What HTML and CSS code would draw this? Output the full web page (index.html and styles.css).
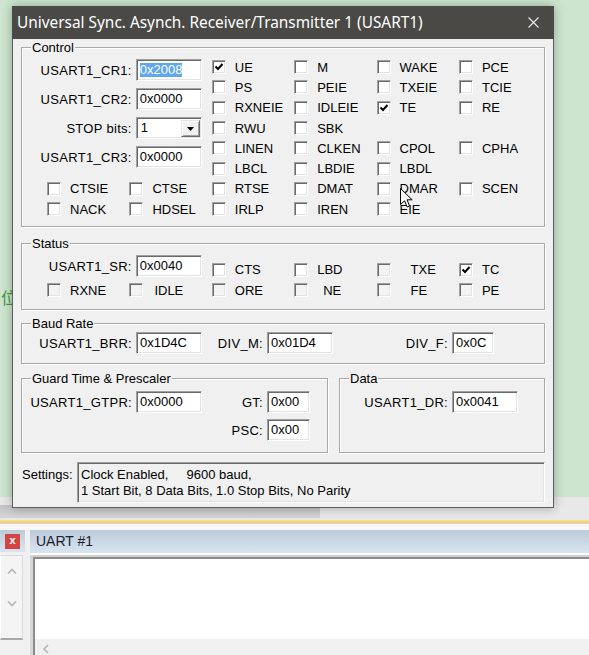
FILE: index.html
```html
<!DOCTYPE html>
<html>
<head>
<meta charset="utf-8">
<title>USART1</title>
<link rel="stylesheet" href="styles.css">
</head>
<body>
<div class="desktop"><span class="bg-char">位</span></div>
<div class="hband"><div class="hthumb"></div></div>
<div class="splitter"></div>
<div class="panes">
  <div class="pane-left">
    <div class="pane-head"><span class="close-btn">x</span></div>
    <div class="lbody">
      <svg class="chev" width="10" height="6" viewBox="0 0 10 6"><path d="M1 5.5 5 1.5 9 5.5"/></svg>
      <svg class="chev" width="10" height="6" viewBox="0 0 10 6"><path d="M1 0.5 5 4.5 9 0.5"/></svg>
    </div>
  </div>
  <div class="pane-main">
    <div class="pane-head"><span class="pane-title">UART #1</span></div>
    <div class="term">
      <div class="term-in">
        <div class="term-area"></div>
        <div class="term-scroll"><svg class="chev" width="7" height="10" viewBox="0 0 7 10"><path d="M6 1 2 5 6 9"/></svg></div>
      </div>
    </div>
  </div>
</div>

<div class="dialog">
  <div class="titlebar">
    <span class="title">Universal Sync. Asynch. Receiver/Transmitter 1 (USART1)</span>
    <svg class="close-x" width="11" height="11" viewBox="0 0 11 11"><path d="M0.5 0.5 10.5 10.5M10.5 0.5 0.5 10.5"/></svg>
  </div>
  <div class="dlg-body">
    <div class="group g-control">
      <span class="group-title">Control</span>
      <div class="cgrid">
        <div class="regs">
          <div class="field"><span class="lbl">USART1_CR1:</span><span class="edit"><span class="sel">0x2008</span></span></div>
          <div class="field"><span class="lbl">USART1_CR2:</span><span class="edit">0x0000</span></div>
          <div class="field"><span class="lbl">STOP bits:</span><span class="edit combo"><span class="combo-val">1</span><span class="combo-btn"><svg width="7" height="4" viewBox="0 0 7 4"><path d="M0 0h7L3.5 4z"/></svg></span></span></div>
          <div class="field"><span class="lbl">USART1_CR3:</span><span class="edit">0x0000</span></div>
        </div>
        <span class="cb"><i class="box"><svg viewBox="0 0 12 12"><path d="M2.5 5.5 5 8l4.5-5"/></svg></i>UE</span>
        <span class="cb"><i class="box"></i>M</span>
        <span class="cb"><i class="box"></i>WAKE</span>
        <span class="cb"><i class="box"></i>PCE</span>

        <span class="cb"><i class="box"></i>PS</span>
        <span class="cb"><i class="box"></i>PEIE</span>
        <span class="cb"><i class="box"></i>TXEIE</span>
        <span class="cb"><i class="box"></i>TCIE</span>

        <span class="cb"><i class="box"></i>RXNEIE</span>
        <span class="cb"><i class="box"></i>IDLEIE</span>
        <span class="cb"><i class="box"><svg viewBox="0 0 12 12"><path d="M2.5 5.5 5 8l4.5-5"/></svg></i>TE</span>
        <span class="cb"><i class="box"></i>RE</span>

        <span class="cb"><i class="box"></i>RWU</span>
        <span class="cb"><i class="box"></i>SBK</span>
        <span class="cell"></span>
        <span class="cell"></span>

        <span class="cb"><i class="box"></i>LINEN</span>
        <span class="cb"><i class="box"></i>CLKEN</span>
        <span class="cb"><i class="box"></i>CPOL</span>
        <span class="cb"><i class="box"></i>CPHA</span>

        <span class="cb"><i class="box"></i>LBCL</span>
        <span class="cb"><i class="box"></i>LBDIE</span>
        <span class="cb"><i class="box"></i>LBDL</span>
        <span class="cell"></span>

        <span class="cb"><i class="box"></i>CTSIE</span>
        <span class="cb"><i class="box"></i>CTSE</span>
        <span class="cb"><i class="box"></i>RTSE</span>
        <span class="cb"><i class="box"></i>DMAT</span>
        <span class="cb"><i class="box"></i>DMAR</span>
        <span class="cb"><i class="box"></i>SCEN</span>

        <span class="cb"><i class="box"></i>NACK</span>
        <span class="cb"><i class="box"></i>HDSEL</span>
        <span class="cb"><i class="box"></i>IRLP</span>
        <span class="cb"><i class="box"></i>IREN</span>
        <span class="cb"><i class="box"></i>EIE</span>
        <span class="cell"></span>
      </div>
    </div>

    <div class="group g-status">
      <span class="group-title">Status</span>
      <div class="sgrid">
        <div class="field field-wide"><span class="lbl">USART1_SR:</span><span class="edit">0x0040</span></div>
        <span class="cb top"><i class="box"></i>CTS</span>
        <span class="cb top"><i class="box"></i>LBD</span>
        <span class="cb top"><i class="box dim"></i><span class="shift-11">TXE</span></span>
        <span class="cb top"><i class="box"><svg viewBox="0 0 12 12"><path d="M2.5 5.5 5 8l4.5-5"/></svg></i>TC</span>

        <span class="cb"><i class="box dim"></i>RXNE</span>
        <span class="cb"><i class="box dim"></i><span class="shift-2">IDLE</span></span>
        <span class="cb"><i class="box dim"></i>ORE</span>
        <span class="cb"><i class="box dim"></i><span class="shift-6">NE</span></span>
        <span class="cb"><i class="box dim"></i><span class="shift-11">FE</span></span>
        <span class="cb"><i class="box dim"></i>PE</span>
      </div>
    </div>

    <div class="group g-baud">
      <span class="group-title">Baud Rate</span>
      <div class="field w180"><span class="lbl">USART1_BRR:</span><span class="edit">0x1D4C</span></div>
      <div class="field w131"><span class="lbl">DIV_M:</span><span class="edit">0x01D4</span></div>
      <div class="field w161"><span class="lbl">DIV_F:</span><span class="edit short">0x0C</span></div>
    </div>

    <div class="group-row">
      <div class="group g-guard">
        <span class="group-title">Guard Time &amp; Prescaler</span>
        <div class="ggrid">
          <div class="field"><span class="lbl">USART1_GTPR:</span><span class="edit">0x0000</span></div>
          <div class="field"><span class="lbl">GT:</span><span class="edit tiny">0x00</span></div>
          <span class="cell"></span>
          <div class="field"><span class="lbl">PSC:</span><span class="edit tiny">0x00</span></div>
        </div>
      </div>
      <div class="group g-data">
        <span class="group-title">Data</span>
        <div class="field w178"><span class="lbl">USART1_DR:</span><span class="edit">0x0041</span></div>
      </div>
    </div>

    <div class="settings">
      <span class="settings-lbl">Settings:</span>
      <div class="settings-box">
        <div>Clock Enabled,&nbsp;&nbsp;&nbsp;&nbsp; 9600 baud,</div>
        <div>1 Start Bit, 8 Data Bits, 1.0 Stop Bits, No Parity</div>
      </div>
    </div>
  </div>
</div>

<svg class="cursor" width="13" height="20" viewBox="0 0 13 20"><path d="M0.5 0.5V16.5L4.5 12.8L7.2 19L9.6 18L7 11.8H12.2Z"/></svg>
</body>
</html>
```

FILE: styles.css
```css
* { box-sizing: border-box; }
html, body { margin: 0; padding: 0; }
body {
  width: 589px;
  height: 655px;
  overflow: hidden;
  position: relative;
  background: #f0f0f0;
  font-family: "Liberation Sans", Arial, sans-serif;
  font-size: 13px;
  line-height: 15px;
  color: #000;
}

/* ---------- background application ---------- */
.desktop { height: 497px; background: #cde5ce; position: relative; }
.bg-char {
  position: absolute; left: 1px; top: 288px;
  font-family: "Noto Sans CJK SC", sans-serif;
  font-size: 16px; line-height: 18px; color: #3f9b45;
}
.hband { height: 23px; background: #e8e8e8; padding-top: 8px; }
.hthumb { width: 320px; height: 13px; background: linear-gradient(#c4c4c4, #d5d5d5); }
.splitter {
  height: 10px;
  background: linear-gradient(#fbe29a 0, #f3ca5c 3px, #d6d6d6 3px, #d6d6d6 4px, #f7f7f7 4px);
}
.panes { display: flex; gap: 5px; height: 125px; }
.pane-head {
  height: 23px;
  background: linear-gradient(#bccbd9, #d8e5f1);
  display: flex; align-items: center;
}
.pane-left { width: 25px; }
.pane-left .pane-head { height: 22px; padding-left: 5px; }
.close-btn {
  width: 15px; height: 15px;
  background: #d24545;
  color: #fff; font-weight: bold; font-size: 11px; line-height: 13px;
  text-align: center;
}
.lbody {
  margin-top: 3px; height: 85px; width: 23px;
  background: #f4f4f4;
  border: 1px solid #dadada; border-left-color: #fff; border-bottom: 2px solid #a8a8a8;
  display: flex; flex-direction: column; align-items: center;
  gap: 27px; padding-top: 12px;
}
.chev { fill: none; stroke: #b4b4b4; stroke-width: 1.6; }
.pane-main { flex: 1; background: #fff; }
.pane-title { padding-left: 6px; font-size: 14px; color: #1c1c2c; }
.term {
  margin-top: 2px; height: 100px;
  border-top: 2px solid #d0d0d0; border-left: 3px solid #d6d6d6;
}
.term-in {
  height: 100%;
  border-top: 2px solid #8c8c8c; border-left: 2px solid #8c8c8c;
  display: flex; flex-direction: column;
}
.term-area { flex: 1; background: #fff; }
.term-scroll { height: 16px; background: #f0f0f0; padding: 3px 0 0 7px; }

/* ---------- dialog window ---------- */
.dialog {
  position: absolute; left: 12px; top: 6px;
  width: 542px; height: 502px;
  background: #f0f0f0;
  border: 1px solid #5e5e5e; border-top: 0;
  box-shadow: 0 0 10px rgba(0, 0, 0, 0.3);
}
.titlebar {
  height: 33px; margin: 0 -1px;
  background: #4a4946;
  display: flex; align-items: center; justify-content: space-between;
  padding: 0 15px 0 5px;
}
.title {
  font-family: "Noto Sans", "Open Sans", sans-serif;
  font-size: 15.4px; color: #fff;
}
.close-x { fill: none; stroke: #ececec; stroke-width: 1.1; }
.dlg-body { padding: 8px 8px 0; }

.group {
  position: relative;
  border: 1px solid #a9a9a9;
  box-shadow: inset 1px 1px 0 #fff, 1px 1px 0 #fff;
}
.group-title {
  position: absolute; top: -8px; left: 9px;
  padding: 0 1px; background: #f0f0f0; line-height: 15px;
}
.g-control { height: 180px; padding: 9px 0 0 25px; }
.g-status { height: 67px; margin-top: 16px; padding: 11px 0 0 25px; }
.g-baud { height: 41px; margin-top: 13px; padding-top: 8px; display: flex; }
.group-row { display: flex; gap: 11px; margin-top: 14px; }
.g-guard { width: 307px; height: 75px; padding-top: 12px; }
.g-data { width: 206px; height: 75px; padding-top: 12px; }

.cgrid {
  display: grid;
  grid-template-columns: repeat(6, 82.4px);
  grid-template-rows: repeat(8, 20.3px);
  align-items: center;
}
.regs {
  grid-column: 1 / 3; grid-row: 1 / 7;
  align-self: start; margin: 2px 0 0 -25px;
  display: flex; flex-direction: column; gap: 7px;
}
.regs .field { padding-right: 10px; }

.sgrid {
  display: grid;
  grid-template-columns: repeat(6, 82.4px);
  grid-template-rows: 22px 20px;
  row-gap: 3px;
  align-items: center;
}
.field-wide { grid-column: 1 / 3; margin-left: -25px; padding-right: 10px; }
.cb.top { align-self: end; }

.ggrid { display: grid; grid-template-columns: 180px 108px; row-gap: 6px; }

.field {
  display: flex; justify-content: flex-end; align-items: center;
  gap: 4px; height: 22px;
}
.lbl { white-space: nowrap; letter-spacing: 0.3px; }
.w180 { width: 180px; }
.w131 { width: 131px; }
.w161 { width: 161px; }
.w178 { width: 178px; }

.edit {
  width: 66px; height: 22px; flex: none;
  background: #fff;
  border: 1px solid; border-color: #a0a0a0 #fff #fff #a0a0a0;
  box-shadow: inset 1px 1px 0 #6a6a6a, inset -1px -1px 0 #e3e3e3;
  padding: 2px 0 0 3px; line-height: 16px;
  white-space: nowrap;
}
.edit.short { width: 42px; }
.edit.tiny { width: 43px; }
.sel { display: inline-block; background: #5fa8ec; color: #fff; line-height: 14px; margin-top: 1px; }
.combo { display: flex; padding: 2px 1px 1px 2px; }
.combo-val { flex: 1; padding: 0 0 0 2px; }
.combo-btn {
  width: 19px; height: 17px;
  background: #f0f0f0;
  border: 1px solid; border-color: #e3e3e3 #6a6a6a #6a6a6a #e3e3e3;
  box-shadow: inset 1px 1px 0 #fff, inset -1px -1px 0 #a0a0a0;
  display: flex; align-items: center; justify-content: center;
}
.combo-btn svg { fill: #000; }

.cb { display: flex; align-items: center; gap: 9px; height: 15px; white-space: nowrap; }
.box {
  width: 14px; height: 14px; flex: none;
  background: #fff;
  border: 1px solid; border-color: #a0a0a0 #fff #fff #a0a0a0;
  box-shadow: inset 1px 1px 0 #6a6a6a, inset -1px -1px 0 #e3e3e3;
  display: flex; align-items: center; justify-content: center;
}
.box.dim { background: #f3f3f3; }
.box svg { width: 12px; height: 12px; fill: none; stroke: #000; stroke-width: 2; }
.shift-2 { margin-left: 2px; }
.shift-6 { margin-left: 6px; }
.shift-11 { margin-left: 11px; }

.settings { display: flex; margin-top: 9px; height: 41px; }
.settings-lbl { width: 56px; padding: 5px 0 0 1px; line-height: 16px; }
.settings-box {
  flex: 1; height: 41px;
  border: 1px solid; border-color: #a0a0a0 #fff #fff #a0a0a0;
  box-shadow: inset 1px 1px 0 #6a6a6a, inset -1px -1px 0 #e3e3e3;
  padding: 4px 0 0 3px; line-height: 16px;
}

.cursor {
  position: absolute; left: 400px; top: 188px;
  fill: #fff; stroke: #000; stroke-width: 1;
}
```
